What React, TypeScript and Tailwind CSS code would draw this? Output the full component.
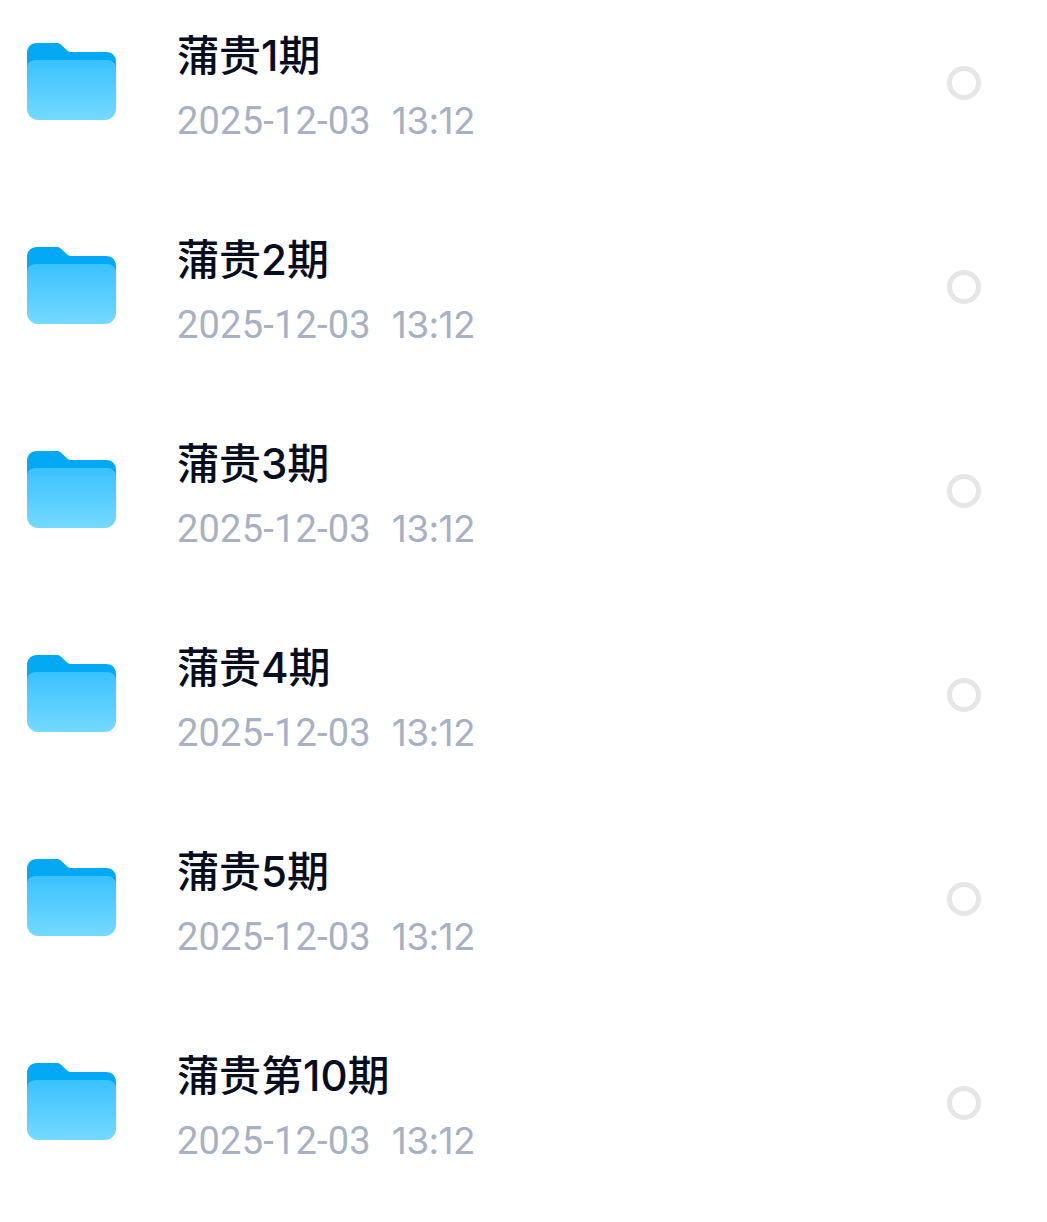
const rows = ["蒲贵1期", "蒲贵2期", "蒲贵3期", "蒲贵4期", "蒲贵5期", "蒲贵第10期"];

function Folder() {
  return (
    <svg width="89" height="77" viewBox="0 0 89 77" className="shrink-0">
      <defs>
        <linearGradient id="front" x1="0" y1="0" x2="0" y2="1">
          <stop offset="0" stopColor="#39c1ff" />
          <stop offset="1" stopColor="#74d9ff" />
        </linearGradient>
      </defs>
      <path d="M0 10C0 4 4 0 10 0H29C31.500 0 33 0.500 35 2.500L39 6.500C41 8.500 42.500 9 45 9H79C85 9 89 13 89 19V40H0Z" fill="#03a9f5" />
      <path d="M0 25C0 20 4 17 9 17H80C85 17 89 20 89 25V66C89 72 84 77 78 77H11C5 77 0 72 0 66Z" fill="url(#front)" />
    </svg>
  );
}

export default function App() {
  return (
    <div className="min-h-[1222px] bg-white" style={{ fontFamily: '"Inter", "Noto Sans CJK SC", sans-serif' }}>
      {rows.map((title) => (
        <div key={title} className="flex h-[204px] items-start pl-[27px]">
          <div className="mt-[43px]">
            <Folder />
          </div>
          <div className="ml-[61px] mt-[31px] flex-1">
            <div className="text-[42px] leading-[50px] font-medium text-[#060d1f]">{title}</div>
            <div className="mt-[14px] flex items-baseline pt-px text-[37px] leading-[49px] text-[#a7b0c4]">
              <span className="font-['Roboto'] text-[38px] tracking-[0.2px]">2025-12-03</span>
              <span className="ml-[21px] tracking-[-0.6px]">13:12</span>
            </div>
          </div>
          <div className="mt-[66px] mr-[66px] h-[34px] w-[34px] rounded-full border-[5px] border-[#e6e6e6]" />
        </div>
      ))}
    </div>
  );
}
